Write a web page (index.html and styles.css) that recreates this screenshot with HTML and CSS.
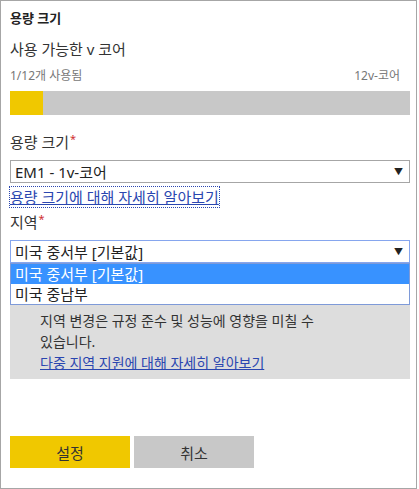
FILE: index.html
```html
<!DOCTYPE html>
<html lang="ko">
<head>
<meta charset="utf-8">
<link rel="stylesheet" href="styles.css">
</head>
<body>
<div class="frame">
  <div class="title">용량 크기</div>
  <div class="subtitle">사용 가능한 v 코어</div>
  <div class="usage">
    <span>1/12개 사용됨</span>
    <span>12v-코어</span>
  </div>
  <div class="bar"><div class="bar-fill" style="width:33px"></div></div>

  <div class="label">용량 크기<span class="req">*</span></div>
  <div class="select">
    <span>EM1 - 1v-코어</span>
    <span class="arrow">▼</span>
  </div>
  <a class="link focus" href="#">용량 크기에 대해 자세히 알아보기</a>

  <div class="label label-tight">지역<span class="req">*</span></div>
  <div class="region">
    <div class="select active">
      <span>미국 중서부 [기본값]</span>
      <span class="arrow">▼</span>
    </div>
    <div class="dropdown">
      <div class="option selected">미국 중서부 [기본값]</div>
      <div class="option">미국 중남부</div>
    </div>
    <div class="info">
      <p>지역 변경은 규정 준수 및 성능에 영향을 미칠 수<br>있습니다.</p>
      <a class="link" href="#">다중 지역 지원에 대해 자세히 알아보기</a>
    </div>
  </div>

  <div class="buttons">
    <button class="btn primary">설정</button>
    <button class="btn secondary">취소</button>
  </div>
</div>
</body>
</html>
```

FILE: styles.css
```css
* { box-sizing: border-box; }
html, body { margin: 0; padding: 0; background: #fff; }
body {
  font-family: "Segoe UI", "Noto Sans", "Noto Sans CJK KR", sans-serif;
  color: #333;
}
.frame {
  width: 417px;
  height: 489px;
  border: 1px solid #a6a6a6;
  padding: 0 6px 0 9px;
  display: flex;
  flex-direction: column;
}
.title {
  font-size: 13px;
  font-weight: bold;
  line-height: 18px;
  margin-top: 8px;
  color: #222;
}
.subtitle {
  font-size: 15px;
  line-height: 20px;
  margin-top: 12px;
  color: #333;
}
.usage {
  display: flex;
  justify-content: space-between;
  font-size: 12px;
  line-height: 16px;
  color: #777;
  margin-top: 9px;
  padding-right: 10px;
}
.bar {
  height: 24px;
  background: #c8c8c8;
  margin-top: 7px;
}
.bar-fill { height: 100%; background: #f0c800; }
.label {
  font-size: 15px;
  line-height: 20px;
  margin-top: 14px;
  color: #333;
}
.label.label-tight { margin-top: 2px; }
.req { color: #d03030; font-size: 11px; vertical-align: 5px; margin-left: 1px; }
.select {
  height: 23px;
  border: 1px solid #a6a6a6;
  background: #fff;
  display: flex;
  align-items: center;
  justify-content: space-between;
  padding: 0 6px 0 4px;
  font-size: 15px;
  color: #222;
  margin-top: 8px;
}
.arrow { font-size: 9px; color: #222; }
.link {
  font-size: 15px;
  line-height: 20px;
  color: #2a46b0;
  text-decoration: underline;
  margin-top: 4px;
  align-self: flex-start;
}
.link.focus { outline: 1px dotted #2a46b0; outline-offset: 0; }
.region { position: relative; display: flex; flex-direction: column; }
.select.active { border-color: #86a6ee; }
.dropdown {
  position: absolute;
  left: 0;
  right: 0;
  top: 31px;
  border: 1px solid #7e9ad8;
  background: #fff;
  z-index: 2;
}
.option {
  height: 20px;
  line-height: 20px;
  font-size: 15px;
  padding-left: 4px;
  color: #222;
}
.option.selected { background: #3892ff; color: #fff; }
.info {
  background: #dddddd;
  margin-top: 3px;
  height: 113px;
  padding: 44px 10px 0 30px;
  display: flex;
  flex-direction: column;
}
.info p {
  margin: 0;
  font-size: 14px;
  line-height: 21px;
  color: #333;
}
.info .link { font-size: 14px; margin-top: 1px; }
.buttons {
  display: flex;
  gap: 4px;
  margin-top: 57px;
}
.btn {
  width: 120px;
  height: 32px;
  border: 0;
  font-family: inherit;
  font-size: 15px;
  color: #333;
  padding: 0;
}
.btn.primary { background: #f0c800; }
.btn.secondary { background: #c8c8c8; }
```
